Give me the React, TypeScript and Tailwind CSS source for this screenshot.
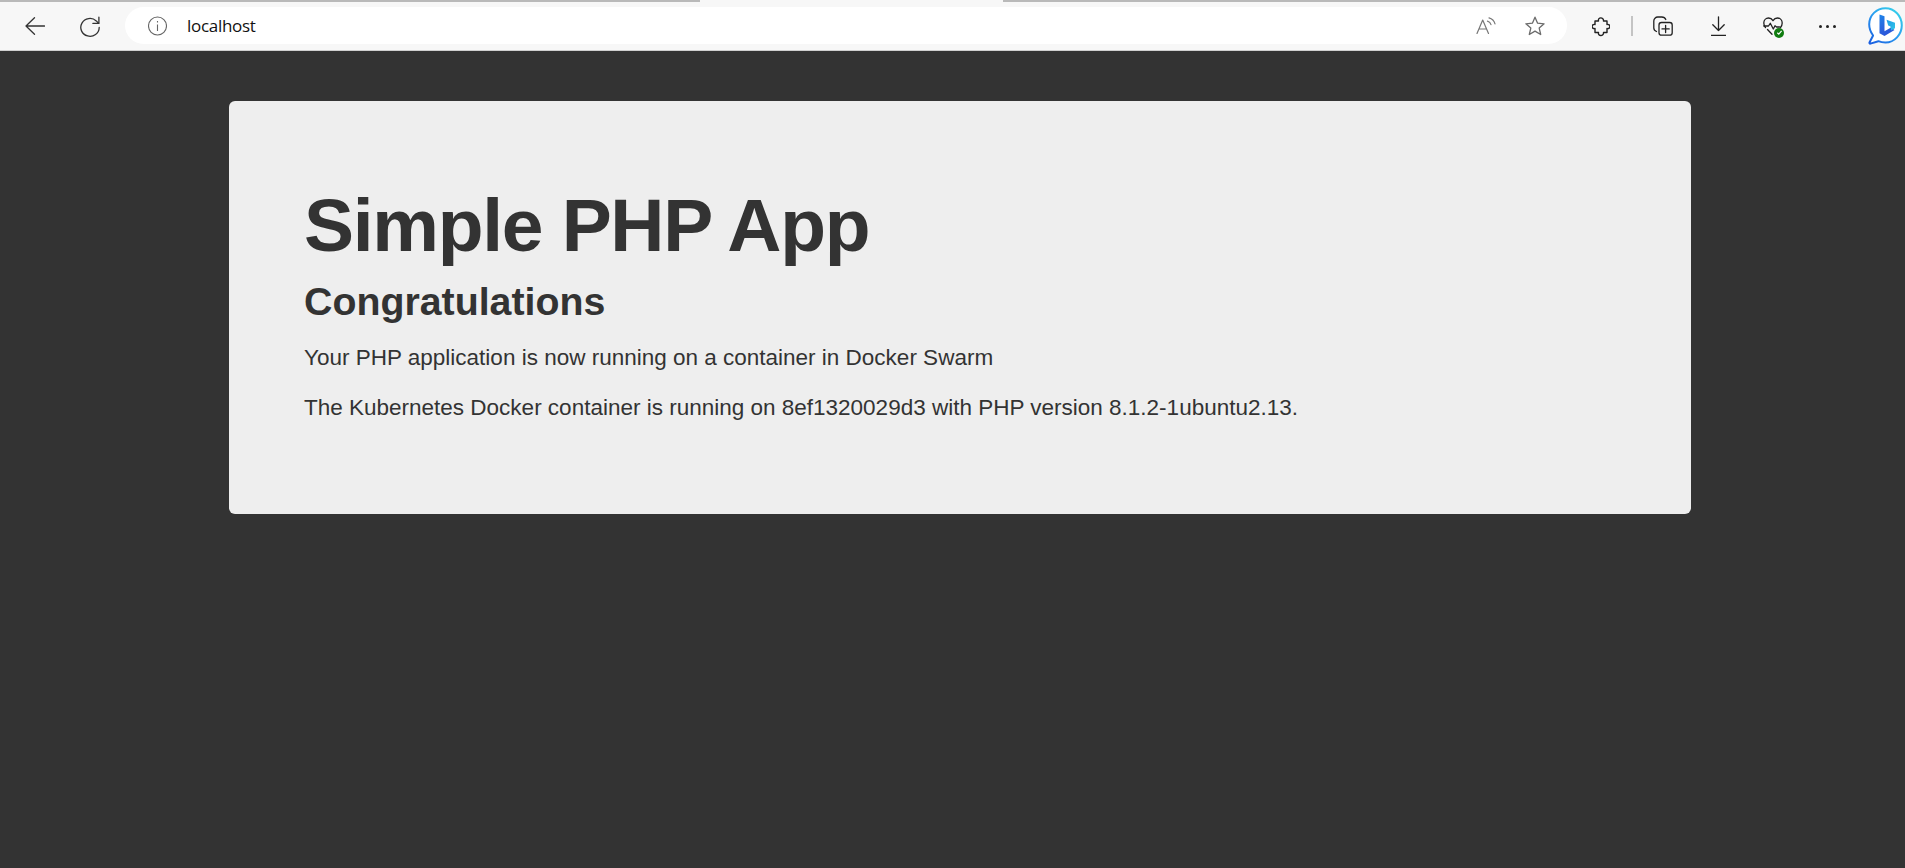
import React from "react";

const Bing = () => (
  <svg width="35" height="38" viewBox="0 0 35 38" fill="none">
    <defs>
      <linearGradient id="bingRing" x1="3" y1="36" x2="32" y2="3" gradientUnits="userSpaceOnUse">
        <stop offset="0" stopColor="#1a5fe0" />
        <stop offset="0.5" stopColor="#2a9bf0" />
        <stop offset="1" stopColor="#37d5ea" />
      </linearGradient>
      <linearGradient id="bingB" x1="11" y1="7" x2="25" y2="30" gradientUnits="userSpaceOnUse">
        <stop offset="0" stopColor="#1d86ea" />
        <stop offset="0.6" stopColor="#2a5fdc" />
        <stop offset="1" stopColor="#2b4fd6" />
      </linearGradient>
      <linearGradient id="bingC" x1="18" y1="14" x2="30" y2="24" gradientUnits="userSpaceOnUse">
        <stop offset="0" stopColor="#1e9be8" />
        <stop offset="1" stopColor="#37cfe6" />
      </linearGradient>
    </defs>
    <path d="M17.500 1.200C8.500 1.200 1.200 8.300 1.200 17.300c0 4.500 1.500 8 3.900 11.200L1.500 35.500c-.3 .7 .2 1.300 .9 1.100l8-2.400c2.200 1 4.600 1.400 7.100 1.400 9 0 16.300-8 16.300-17.300S26.500 1.200 17.500 1.200z" fill="#fff" stroke="url(#bingRing)" strokeWidth="2" strokeLinejoin="round" />
    <path d="M11.500 7.500l5 1.700v15l6.500-3.700 3.500 2.400-10 6.100-5-2.800z" fill="url(#bingB)" />
    <path d="M18.500 12.800l8.500 3v5.500l-4 2.100-.5-3.900-2.300-.9z" fill="url(#bingC)" />
  </svg>
);

export default function App() {
  return (
    <div className="min-h-[868px] bg-[#333333] font-['Liberation_Sans',Arial,sans-serif]">
      <header className="relative flex h-[51px] items-center border-t-2 border-b border-t-[#b9b9b9] border-b-[#d0d0d0] bg-[#f7f7f7]">
        <div className="absolute left-[700px] -top-[2px] h-[3px] w-[303px] bg-[#f7f7f7]" />
        <div className="flex w-[125px] shrink-0 items-center pl-[25px]">
          <svg width="20" height="18" viewBox="0 0 20 18" fill="none" stroke="#333" strokeWidth="1.300" strokeLinecap="round" strokeLinejoin="round"><path d="M19.500 9H1M9.500 .8 1 9l8.500 8.200" /></svg>
          <svg className="ml-[35px]" width="20" height="21" viewBox="0 0 20 21" fill="none" stroke="#333" strokeWidth="1.300" strokeLinecap="round" strokeLinejoin="round"><path d="M19.200 11.500a9.200 8.900 0 1 1-2.900-6.600l2.200 2.300" /><path d="M18.900 1.200v6.200h-6" /></svg>
        </div>
        <div className="mb-[1px] flex h-[37px] w-[1442px] shrink-0 items-center rounded-[19px] bg-white pl-[23px] pr-[22px]">
          <svg width="19" height="20" viewBox="0 0 19 20" fill="none" stroke="#666" strokeWidth="1.100"><circle cx="9.500" cy="10" r="9" /><path d="M9.500 8.500v6.500M9.500 5v1.400" /></svg>
          <span className="ml-[20px] font-['Open_Sans',sans-serif] text-[17px] leading-none tracking-[-0.3px] text-[#111]">localhost</span>
          <div className="ml-auto flex items-center gap-[29px]">
            <svg width="20" height="17" viewBox="0 0 20 17" fill="none" stroke="#777" strokeWidth="1.200" strokeLinecap="round" strokeLinejoin="round"><path d="M1 16.500 6.700 3l5.800 13.500M3 12h7.500" /><path d="M11.500 4.200c1.800.5 3 1.700 3.500 3.500M13 .8c2.900.8 5.200 3 6 6" /></svg>
            <svg width="20" height="20" viewBox="0 0 20 20" fill="none" stroke="#6b6b6b" strokeWidth="1.300" strokeLinejoin="round"><path d="M10 1.200l2.600 6 6.500.6-4.900 4.300 1.500 6.400L10 15.100l-5.700 3.400 1.500-6.400L.9 7.800l6.500-.6z" /></svg>
          </div>
        </div>
        <div className="flex flex-1 items-center pl-[25px]">
          <svg width="18" height="21" viewBox="0 0 18 21" fill="none" stroke="#222" strokeWidth="1.400" strokeLinejoin="round"><path d="M3 5H6.500C5.500 .8 12 .8 11.500 5H15V8.500C18.800 7.500 18.800 13.500 15 12.500V16.500H11.500C12 20.500 5.500 20.500 6.500 16.500H3V12.500C-.8 13.500-.8 7.500 3 8.500Z" /></svg>
          <div className="ml-[21px] h-[20px] w-[1.500px] bg-[#c4c4c4]" />
          <svg className="ml-[20.500px]" width="20" height="20" viewBox="0 0 20 20" fill="none" stroke="#222" strokeWidth="1.300" strokeLinecap="round" strokeLinejoin="round"><path d="M3.500 15.500C1.800 14.800 .8 13.500 .8 12V5a4 4 0 0 1 4-4h4c2 0 3.400 1 4 2.500" /><rect x="6" y="6.500" width="13.200" height="12.700" rx="2.500" /><path d="M12.600 9.300v7.200M9 12.900h7.200" /></svg>
          <svg className="ml-[38px]" width="15" height="20" viewBox="0 0 15 20" fill="none" stroke="#222" strokeWidth="1.300" strokeLinecap="round" strokeLinejoin="round"><path d="M7.500 .8V14.500M1.800 8.800l5.700 5.700 5.700-5.700M.5 19.300h14" /></svg>
          <div className="relative ml-[37px] h-[21px] w-[20px]">
            <svg width="20" height="21" viewBox="0 0 20 21" fill="none" stroke="#222" strokeWidth="1.300" strokeLinecap="round" strokeLinejoin="round"><path d="M2.500 11.500C1.300 10 .8 8.600 .8 7 .8 4 3 2 5.500 2c1.800 0 3.400 .9 4.500 2.700C11.100 2.900 12.700 2 14.500 2 17 2 19.200 4 19.200 7c0 1.800-.7 3.300-1.700 4.500" /><path d="M.8 10h4.700l1.800-2.700 3 5.700 1.700-3.200 1.500 1.200h3M4.500 13.500l4.500 4.800" /></svg>
            <div className="absolute -bottom-[1px] -right-[1px] flex h-[10px] w-[10px] items-center justify-center rounded-full bg-[#107c10]">
              <svg width="7" height="7" viewBox="0 0 7 7" fill="none" stroke="#fff" strokeWidth="1.200"><path d="M1.300 3.700l1.500 1.400 2.800-3.200" /></svg>
            </div>
          </div>
          <div className="ml-[36px] flex gap-[4px]">
            <span className="h-[3px] w-[3px] rounded-full bg-[#222]" />
            <span className="h-[3px] w-[3px] rounded-full bg-[#222]" />
            <span className="h-[3px] w-[3px] rounded-full bg-[#222]" />
          </div>
          <div className="ml-auto mr-[2px] shrink-0"><Bing /></div>
        </div>
      </header>
      <main className="pl-[229px] pr-[214px] pt-[50px]">
        <section className="h-[413px] rounded-[6px] bg-[#eeeeee] px-[75px] pt-[85px] text-[#333333]">
          <h1 className="text-[75px] font-bold leading-[79px] tracking-[-1.300px]">Simple PHP App</h1>
          <h2 className="mt-[15px] text-[39.300px] font-bold leading-[42px]">Congratulations</h2>
          <p className="mt-[21px] text-[22.500px] leading-[30px]">Your PHP application is now running on a container in Docker Swarm</p>
          <p className="mt-[20px] text-[22.500px] leading-[30px]">The Kubernetes Docker container is running on 8ef1320029d3 with PHP version 8.1.2-1ubuntu2.13.</p>
        </section>
      </main>
    </div>
  );
}
